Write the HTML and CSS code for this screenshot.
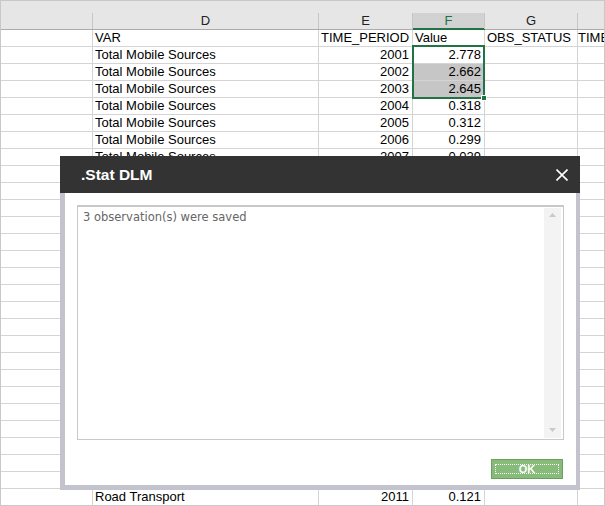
FILE: index.html
```html
<!DOCTYPE html>
<html>
<head>
<meta charset="utf-8">
<link rel="stylesheet" href="styles.css">
</head>
<body>
<div class="sheet">
  <div class="row head">
    <div class="hcell"><div class="hlabel"></div></div>
    <div class="hcell"><div class="hlabel">D</div></div>
    <div class="hcell"><div class="hlabel">E</div></div>
    <div class="hcell sel"><div class="hlabel">F</div></div>
    <div class="hcell"><div class="hlabel">G</div></div>
    <div class="hcell last"><div class="hlabel"></div></div>
  </div>
  <div class="row"><div class="c"></div><div class="c">VAR</div><div class="c">TIME_PERIOD</div><div class="c">Value</div><div class="c">OBS_STATUS</div><div class="c last">TIME</div></div>
  <div class="row"><div class="c"></div><div class="c">Total Mobile Sources</div><div class="c n">2001</div><div class="c n">2.778</div><div class="c"></div><div class="c last"></div></div>
  <div class="row"><div class="c"></div><div class="c">Total Mobile Sources</div><div class="c n">2002</div><div class="c n hl">2.662</div><div class="c"></div><div class="c last"></div></div>
  <div class="row"><div class="c"></div><div class="c">Total Mobile Sources</div><div class="c n">2003</div><div class="c n hl">2.645</div><div class="c"></div><div class="c last"></div></div>
  <div class="row"><div class="c"></div><div class="c">Total Mobile Sources</div><div class="c n">2004</div><div class="c n">0.318</div><div class="c"></div><div class="c last"></div></div>
  <div class="row"><div class="c"></div><div class="c">Total Mobile Sources</div><div class="c n">2005</div><div class="c n">0.312</div><div class="c"></div><div class="c last"></div></div>
  <div class="row"><div class="c"></div><div class="c">Total Mobile Sources</div><div class="c n">2006</div><div class="c n">0.299</div><div class="c"></div><div class="c last"></div></div>
  <div class="row"><div class="c"></div><div class="c">Total Mobile Sources</div><div class="c n">2007</div><div class="c n">0.029</div><div class="c"></div><div class="c last"></div></div>
  <div class="row blank"></div>
  <div class="row blank"></div>
  <div class="row blank"></div>
  <div class="row blank"></div>
  <div class="row blank"></div>
  <div class="row blank"></div>
  <div class="row blank"></div>
  <div class="row blank"></div>
  <div class="row blank"></div>
  <div class="row blank"></div>
  <div class="row blank"></div>
  <div class="row blank"></div>
  <div class="row blank"></div>
  <div class="row blank"></div>
  <div class="row blank"></div>
  <div class="row blank"></div>
  <div class="row blank"></div>
  <div class="row blank"></div>
  <div class="row blank"></div>
  <div class="row"><div class="c"></div><div class="c">Road Transport</div><div class="c n">2011</div><div class="c n">0.121</div><div class="c"></div><div class="c last"></div></div>

  <div class="selection"><div class="handle"></div></div>

  <div class="dialog">
    <div class="titlebar">
      <span class="title">.Stat DLM</span>
      <svg class="close" width="12" height="12" viewBox="0 0 12 12"><path d="M0.5 0.5 L11.5 11.5 M11.5 0.5 L0.5 11.5" stroke="#fff" stroke-width="1.6" fill="none"/></svg>
    </div>
    <div class="dbody">
      <div class="textbox">
        <div class="msg">3 observation(s) were saved</div>
        <div class="vscroll">
          <svg width="7" height="4" viewBox="0 0 7 4"><path d="M3.5 0 L7 4 L0 4 Z" fill="#c9c9c9"/></svg>
          <svg width="7" height="4" viewBox="0 0 7 4"><path d="M0 0 L7 0 L3.5 4 Z" fill="#c9c9c9"/></svg>
        </div>
      </div>
      <div class="footer">
        <button class="ok"><span class="okfocus">OK</span></button>
      </div>
    </div>
  </div>
</div>
</body>
</html>
```

FILE: styles.css
```css
html, body {
  margin: 0;
  padding: 0;
  background: #fff;
}

.sheet {
  position: relative;
  width: 605px;
  height: 506px;
  box-sizing: border-box;
  border: 1px solid #c8c8c8;
  overflow: hidden;
  font-family: "Liberation Sans", Arial, sans-serif;
  font-size: 13px;
  color: #000;
  background: #fff;
}

.row {
  display: grid;
  grid-template-columns: 92px 226px 94px 72px 93px 1fr;
  height: 17px;
  flex-shrink: 0;
}

.row.blank {
  box-sizing: border-box;
  border-bottom: 1px solid #d4d4d4;
}

.row.head {
  height: 29px;
  background: #e6e6e6;
}

.hcell {
  box-sizing: border-box;
  padding-top: 12px;
  border-bottom: 1px solid #ababab;
}

.hlabel {
  box-sizing: border-box;
  height: 16px;
  border-right: 1px solid #c6c6c6;
  text-align: center;
  line-height: 16px;
  color: #222;
}

.hcell.last .hlabel {
  border-right: none;
}

.hcell.sel {
  border-bottom-color: #217346;
}

.hcell.sel .hlabel {
  background: #d2d2d2;
  color: #217346;
  box-shadow: inset 0 -1px 0 #217346;
}

.c {
  box-sizing: border-box;
  border-right: 1px solid #d4d4d4;
  border-bottom: 1px solid #d4d4d4;
  padding: 0 3px 0 2px;
  line-height: 16px;
  white-space: nowrap;
  overflow: hidden;
}

.c.last {
  border-right: none;
  padding-left: 0;
}

.c.n {
  text-align: right;
}

.c.hl {
  background: #c6c6c6;
}

.selection {
  position: absolute;
  left: 411px;
  top: 44px;
  width: 73px;
  height: 54px;
  box-sizing: border-box;
  border: 2px solid #217346;
}

.handle {
  position: absolute;
  right: -4px;
  bottom: -4px;
  width: 6px;
  height: 6px;
  box-sizing: border-box;
  background: #217346;
  border: 1px solid #fff;
}

.dialog {
  position: absolute;
  left: 59px;
  top: 155px;
  width: 520px;
  height: 334px;
  display: flex;
  flex-direction: column;
}

.titlebar {
  height: 37px;
  background: #333333;
  display: flex;
  align-items: center;
  justify-content: space-between;
  padding: 0 12px 0 21px;
  flex-shrink: 0;
}

.title {
  color: #fff;
  font-family: "Liberation Sans", Arial, sans-serif;
  font-weight: bold;
  font-size: 15.5px;
}

.close {
  display: block;
}

.dbody {
  flex: 1;
  background: #fff;
  border: 5px solid #c3c3cd;
  border-top: none;
  border-right-width: 4px;
  padding: 12px 12px 0 12px;
  display: flex;
  flex-direction: column;
}

.textbox {
  height: 235px;
  box-sizing: border-box;
  border: 1px solid #c8c8c8;
  border-top: 2px solid #c8c8c8;
  padding: 1px 2px 1px 2px;
  display: flex;
}

.msg {
  flex: 1;
  padding: 2px 0 0 3px;
  font-family: "DejaVu Sans", Tahoma, sans-serif;
  font-size: 11.5px;
  line-height: 14px;
  color: #666;
}

.vscroll {
  width: 17px;
  background: #f3f3f3;
  display: flex;
  flex-direction: column;
  justify-content: space-between;
  align-items: center;
  padding: 5px 0 6px;
}

.vscroll svg {
  display: block;
}

.footer {
  display: flex;
  justify-content: flex-end;
  padding-top: 19px;
  padding-right: 1px;
}

.ok {
  width: 72px;
  height: 20px;
  box-sizing: border-box;
  background: #86bb79;
  border: 1px solid #6e9e63;
  padding: 4px 3px;
  margin: 0;
  display: flex;
}

.okfocus {
  flex: 1;
  border: 1px dotted #fff;
  color: #fff;
  font-family: "Liberation Sans", Arial, sans-serif;
  font-weight: bold;
  font-size: 11px;
  line-height: 8px;
  text-align: center;
}
```
